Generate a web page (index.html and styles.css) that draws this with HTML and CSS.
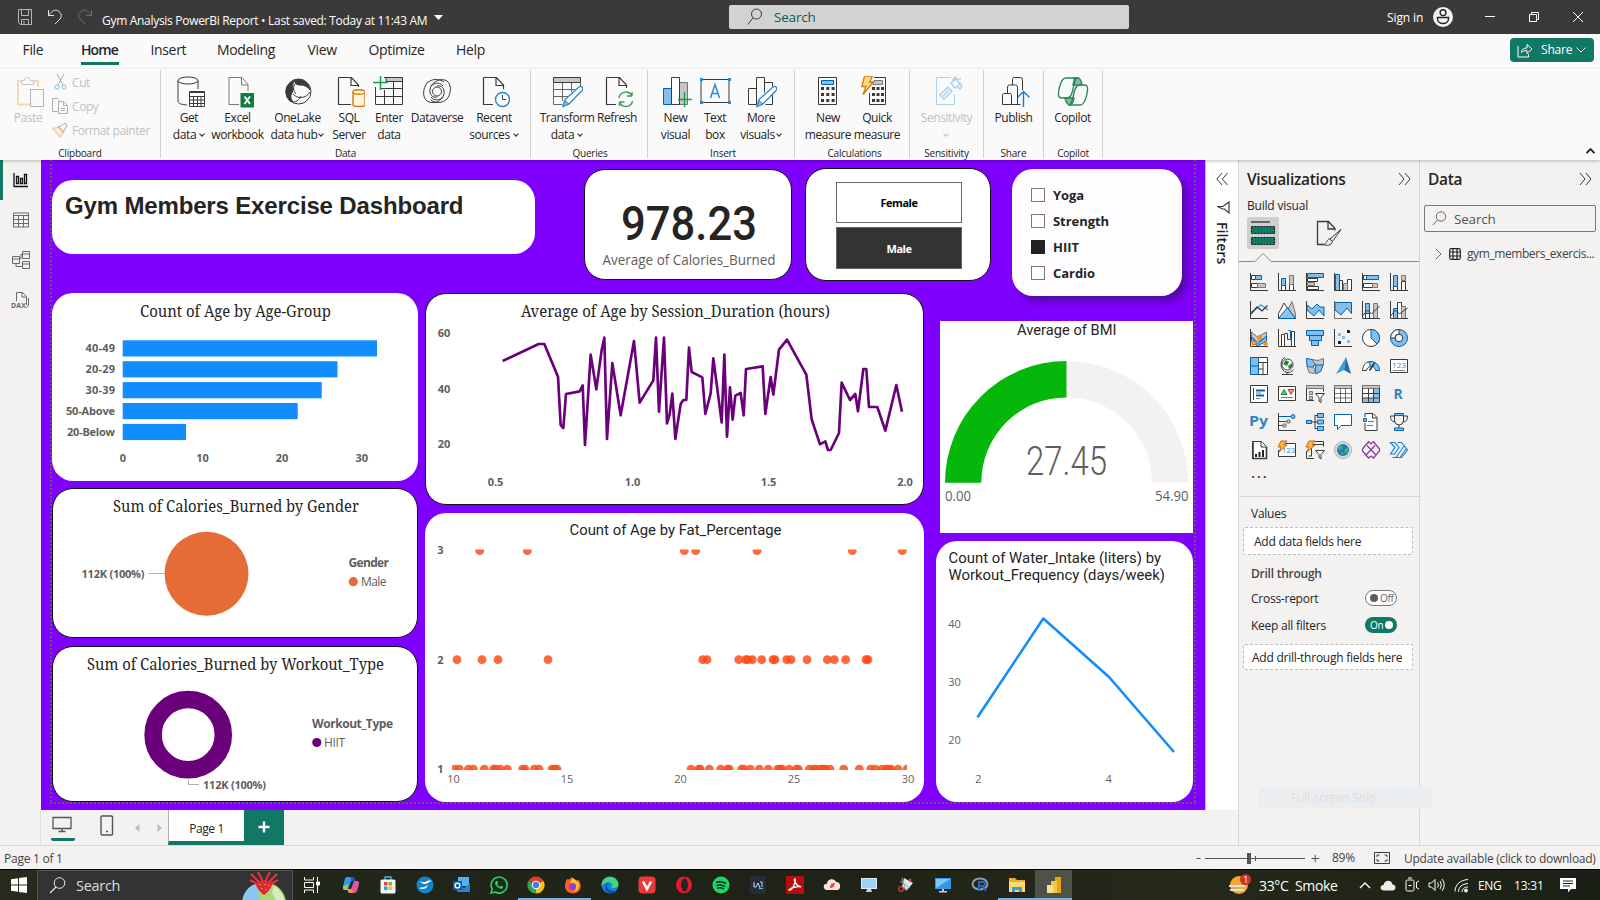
FILE: index.html
```html
<!DOCTYPE html>
<html lang="en">
<head>
<meta charset="utf-8">
<title>Gym Analysis PowerBi Report</title>
<link rel="stylesheet" href="styles.css">
</head>
<body>
<div class="app">

<header class="titlebar">
  <div class="quick">
    <svg width="16" height="18" viewBox="0 0 16 18" class="ln lightgray"><path d="M1.500 1.500h13v15h-11l-2-2zM4.500 1.500v6h7v-6M4.500 16.500v-5h7v5M7 13v3"/></svg>
    <svg width="16" height="18" viewBox="0 0 16 18" class="ln light"><path d="M1.500 2v5.500h5.500M1.500 7.500C5 2 9 1 12 3.500s3 6 0 8.500l-4 4"/></svg>
    <svg width="16" height="18" viewBox="0 0 16 18" class="ln dim"><path d="M14.500 2v5.500h-5.500M14.500 7.500C11 2 7 1 4 3.500s-3 6 0 8.500l4 4"/></svg>
  </div>
  <div class="doc">Gym Analysis PowerBi Report • Last saved: Today at 11:43 AM</div>
  <svg class="caret" width="9" height="5" viewBox="0 0 9 5"><path d="M0 0h9L4.500 5z" fill="#fff"/></svg>
  <div class="topsearch">
    <svg width="16" height="18" viewBox="0 0 16 18" class="ln"><circle cx="9.500" cy="6" r="5"/><path d="M6 9.800L.8 16.500"/></svg>
    <span>Search</span>
  </div>
  <div class="signin">Sign in</div>
  <svg class="avatar" width="20" height="20" viewBox="0 0 20 20"><circle cx="10" cy="10" r="10" fill="#f3f2f1"/><circle cx="10" cy="5.700" r="2.900" fill="none" stroke="#222" stroke-width="1.400"/><path d="M4.500 10.500h11v1c0 3-2.500 5-5.500 5s-5.500-2-5.500-5z" fill="none" stroke="#222" stroke-width="1.400"/></svg>
  <div class="winbtns">
    <svg width="12" height="12" viewBox="0 0 12 12" class="ln white"><path d="M1 5.500h10"/></svg>
    <svg width="12" height="12" viewBox="0 0 12 12" class="ln white"><path d="M1.500 3.500h7v7h-7zM3.500 3.500v-2h7v7h-2"/></svg>
    <svg width="12" height="12" viewBox="0 0 12 12" class="ln white"><path d="M1 1l10 10M11 1L1 11"/></svg>
  </div>
</header>

<nav class="tabs">
  <a class="w-file">File</a><a class="w-home active"><span>Home</span></a><a class="w-insert">Insert</a><a class="w-model">Modeling</a><a class="w-view">View</a><a class="w-opt">Optimize</a><a class="w-help">Help</a>
  <div class="share">
    <svg width="16" height="15" viewBox="0 0 16 15" class="ln white"><path d="M1 3v11h10.500v-3M4.500 9.500C5 6 7 5 10 5V1.500l5 4.500-5 4.500V7.500c-2.500 0-4 .5-5.500 2z"/></svg>
    <span>Share</span>
    <svg width="10" height="6" viewBox="0 0 10 6" class="ln white"><path d="M.5.500L5 5 9.500.500"/></svg>
  </div>
</nav>

<section class="ribbon">
  <div class="group g-clip">
    <div class="row">
      <div class="item off w-paste">
        <svg width="32" height="32" viewBox="0 0 32 32" fill="none"><path d="M9.500 5H6v23.500H18M22 5h4v6" stroke="#f6d9b0" stroke-width="2"/><path d="M9.500 4.500h3c0-4 6-4 6 0h3v4h-12z" stroke="#c8c6c4"/><path d="M18.500 13.500h13v17h-13z" stroke="#b5b3b1"/></svg>
        <span>Paste</span>
      </div>
      <div class="mini">
        <div><svg width="16" height="16" viewBox="0 0 16 16" fill="none"><path d="M5 0l6 11M12 0L6 11" stroke="#aaa"/><circle cx="5" cy="13" r="2" stroke="#8fbfe0"/><circle cx="12" cy="13" r="2" stroke="#8fbfe0"/></svg><span>Cut</span></div>
        <div><svg width="16" height="16" viewBox="0 0 16 16" fill="none" stroke="#b0aeac"><path d="M5.500 13.500h-5v-13h5l2 2M6.500 3.500h5l4 4v8h-9zM11.500 3.500v4h4M9 10.500h4M9 12.500h4"/></svg><span>Copy</span></div>
        <div><svg width="16" height="16" viewBox="0 0 16 16" fill="none"><path d="M1 6.500l7 8.500 4-5-5-5z" stroke="#f3cfa8" stroke-width="1.500" fill="#fbeede"/><path d="M6 5l5 5 1.500-2 2.500-5-2-2-4 3z" stroke="#aaa"/></svg><span class="fp">Format painter</span></div>
      </div>
    </div>
    <div class="label">Clipboard</div>
  </div>

  <div class="group g-data">
    <div class="row">
      <div class="item w48"><svg width="32" height="32" viewBox="0 0 32 32" class="ln"><ellipse cx="15" cy="4.500" rx="10" ry="3.500"/><path d="M5 4.500v21c0 2 4 3.200 9 3.500M25 4.500V13"/><path d="M16.500 15.500h15v15h-15z" fill="#fff"/><path d="M16.500 16.500h15M16.500 20.500h15M16.500 24h15M16.500 27.500h15M20.500 20v10M24.500 20v10M28 20v10"/></svg><span>Get<br>data<i></i></span></div>
      <div class="item w49"><svg width="32" height="32" viewBox="0 0 32 32" fill="none"><path d="M7 1.500h13l6 7V15M7 1.500v27h10M19.500 2v7H26" stroke="#797775"/><path d="M18.500 17h14v14.500h-14z" fill="#107c41"/><path d="M22.500 20.500l5.500 7.500M28 20.500L22.500 28" stroke="#fff" stroke-width="1.900"/></svg><span>Excel<br>workbook</span></div>
      <div class="item w71"><svg width="32" height="32" viewBox="0 0 32 32" class="ln"><circle cx="16.500" cy="15.500" r="12.500"/><path d="M13 4C4 7 1 17 7 24c1 1 3 2 4 2-2-3-3-6-1-9 2-4 0-6 1-9 0-2 1-3 2-4z" fill="#3b3a39"/><path d="M13 4c-1 3 1 5 5 5 5 0 8 2 10 5-1-6-5-10-11-10.500z" fill="#3b3a39"/><path d="M11 18c4 5 13 5 17-2M11 26c4 0 7-3 8-6M13 8c-2 3-2 7 1 10"/></svg><span>OneLake<br>data hub<i class="tight"></i></span></div>
      <div class="item w32"><svg width="32" height="32" viewBox="0 0 32 32" fill="none"><path d="M5.500 1.500h13l7 7.500v2M5.500 1.500v27H18M18 2v7.500h7" stroke="#3b3a39" stroke-width="1.200"/><path d="M20 16v13c0 2 12 2 12 0V16" fill="#fff4e0" stroke="#d67a0b" stroke-width="1.400"/><ellipse cx="26" cy="16" rx="6" ry="2.200" fill="#fff4e0" stroke="#d67a0b" stroke-width="1.400"/></svg><span>SQL<br>Server</span></div>
      <div class="item w48"><svg width="32" height="32" viewBox="0 0 32 32" class="ln"><path d="M13 1.500h16.500v4H13z" fill="#c8c6c4"/><path d="M2.500 11v17.500h27v-27H11M8 12.500h22M3 20.500h27M11.500 14v14M20.500 6v22"/><path d="M7.500 0v14M0 6.500h15" stroke="#1a9d48" stroke-width="1.500"/></svg><span>Enter<br>data</span></div>
      <div class="item w48"><svg width="32" height="32" viewBox="0 0 32 32" class="ln"><path d="M22 21c-4 6-11 7-16 4-5-4-4-13 0-18 4-4 12-5 17-1M10 10c4-6 11-8 16-5 5 4 4 13 0 18-4 4-11 5-16 1"/><circle cx="16" cy="15.500" r="4.500"/><path d="M22 10c-4-5-12-3-13 3s3 9 7 8M10 21c4 5 12 3 13-3s-3-9-7-8"/></svg><span>Dataverse</span></div>
      <div class="item w66"><svg width="32" height="32" viewBox="0 0 32 32" fill="none"><path d="M5.500 1.500h13l7 7.500v4M5.500 1.500v27H15M18 2v7.500h7" stroke="#3b3a39" stroke-width="1.200"/><circle cx="24.500" cy="23.500" r="7" fill="#fff" stroke="#2b88c8" stroke-width="1.500"/><path d="M24.500 19v4.500H28" stroke="#3b3a39"/></svg><span>Recent<br>sources<i></i></span></div>
    </div>
    <div class="label">Data</div>
  </div>

  <div class="group g-query">
    <div class="row">
      <div class="item w60"><svg width="32" height="32" viewBox="0 0 32 32" class="ln"><path d="M2.500 1.500h27v5h-27z" fill="#c8c6c4"/><path d="M2.500 6v22.500h9M29.500 6v5M3 13.500h21M3 20.500h14M11.500 7v18M20.500 7v9" stroke="#666"/><path d="M12 30.500l2-7L28 11c2-2 5 1 3 3.500L18 28z" fill="#fff" stroke="#2b88c8" stroke-width="1.300"/><path d="M12 30.500l2-6 4 3.500z" fill="#83beec" stroke="#2b88c8"/></svg><span>Transform<br>data<i></i></span></div>
      <div class="item w40"><svg width="32" height="32" viewBox="0 0 32 32" fill="none"><path d="M5.500 1.500h13l7 7.500v3M5.500 1.500v27H15M18 2v7.500h7" stroke="#3b3a39" stroke-width="1.200"/><path d="M18 22c1-7 10-8 13-2v-4M31 20h-5M31.500 25c-1 6-10 8-13 1v4M18.500 26h5" stroke="#3b9a55" stroke-width="1.400"/></svg><span>Refresh</span></div>
    </div>
    <div class="label">Queries</div>
  </div>

  <div class="group g-insert">
    <div class="row">
      <div class="item w39"><svg width="32" height="32" viewBox="0 0 32 32" class="ln"><path d="M19.500 6.500h8v22h-8z" fill="#c8c6c4" stroke="#777"/><path d="M3.500 12.500h8v16h-8z" fill="#83beec" stroke="#0063b1"/><path d="M11.500 1.500h8v27h-8z" fill="#fff"/><path d="M24.500 16v15M18 23.500h14" stroke="#1a9d48" stroke-width="1.400"/></svg><span>New<br>visual</span></div>
      <div class="item w40"><svg width="32" height="32" viewBox="0 0 32 32" class="ln"><path d="M2 3.500h28v23H2z"/><path d="M1 2h3v3H1zM29 2h3v3h-3zM1 25h3v3H1zM29 25h3v3h-3z" fill="#2b88d8" stroke="none"/><path d="M11.500 22L16 8.500 20.500 22M13 17.500h6" stroke="#2b88d8" stroke-width="1.500"/></svg><span>Text<br>box</span></div>
      <div class="item w52"><svg width="32" height="32" viewBox="0 0 32 32" class="ln"><path d="M3.500 28.500v-16h8v16zM11.500 28.500v-27h8v15M19.500 6.500h8v4M27.500 19v9.500h-7"/><path d="M12 30.500l2-7L28 11c2-2 5 1 3 3.500L18 28z" fill="#fff" stroke="#2b88c8" stroke-width="1.300"/><path d="M12 30.500l2-6 4 3.500z" fill="#83beec" stroke="#2b88c8"/></svg><span>More<br>visuals<i class="tight"></i></span></div>
    </div>
    <div class="label">Insert</div>
  </div>

  <div class="group g-calc">
    <div class="row">
      <div class="item w48"><svg width="32" height="32" viewBox="0 0 32 32" class="ln"><path d="M6.500 1.500h18v27h-18z"/><path d="M9.500 4.500h12v4h-12z" fill="#83beec" stroke="#0063b1"/><path d="M9 12.500h14M9 18.500h14M9 24.500h14" stroke-width="3" stroke-dasharray="3 2.300"/></svg><span>New<br>measure</span></div>
      <div class="item w50"><svg width="32" height="32" viewBox="0 0 32 32" class="ln"><path d="M13 1.500h11.500v27h-16V17"/><path d="M13 4.500h8.500v4H12z" fill="#c8c6c4" stroke="#777"/><path d="M11 12.500h12M11 18.500h12M11 24.500h12" stroke-width="3" stroke-dasharray="3 1.500"/><path d="M3.500.200h8L8.500 6h4L2 18.500 5 10.500H.800z" fill="#fcd98b" stroke="#d67a0b" stroke-width="1.300"/></svg><span>Quick<br>measure</span></div>
    </div>
    <div class="label">Calculations</div>
  </div>

  <div class="group g-sens">
    <div class="row">
      <div class="item off w72"><svg width="32" height="32" viewBox="0 0 32 32" fill="none" stroke="#a9d3ec"><path d="M20 1.500H5.500v27h18V18"/><path d="M9 19l8-8 4 4-8 8zM12 20l6-6M20 7l4 5 5-4-4-5zM21 5l3-4 3 3M26 10l3 3 2-3-2-3M28 4l2-2" stroke-width="1.500"/></svg><span>Sensitivity<br><i class="solo"></i></span></div>
    </div>
    <div class="label">Sensitivity</div>
  </div>
  <div class="group g-share">
    <div class="row">
      <div class="item w58"><svg width="32" height="32" viewBox="0 0 32 32" class="ln"><path d="M14.500 9V3.500q0-2 2-2h6q2 0 2 2V14M9.500 17v-6q0-2 2-2h6q2 0 2 2v17M5.500 17.500h6q2 0 2 2v9h-9v-9q0-2 1-2zM13.500 28.500h9"/><path d="M25.500 31V15.500M19.500 21.500l6-6 6 6" stroke="#1c79c4" stroke-width="1.400"/></svg><span>Publish</span></div>
    </div>
    <div class="label">Share</div>
  </div>
  <div class="group g-cop">
    <div class="row">
      <div class="item w57"><svg width="32" height="32" viewBox="0 0 32 32" fill="none" stroke="#2a8a57" stroke-width="1.400"><path d="M16 9c1-4 2-7 0-7h5c2 0 3 2 4 7z" fill="#83bd9d"/><path d="M8 22c1 4 2 7 5 7 2 0 3-2 4-7z" fill="#83bd9d"/><path d="M20 2H9C4 2 2 12 1.500 17c-.5 4 1 5 4 5h4c4 0 5-3 6-7l2-8c.5-3 2-5 4-5z"/><path d="M12 29h11c5 0 7-10 7.500-15 .5-4-1-5-4-5h-4c-3 0-4 3-5 6l-2 8c-1 4-2 6-4 6z"/></svg><span>Copilot</span></div>
    </div>
    <div class="label">Copilot</div>
  </div>
  <svg class="collapse" width="9" height="6" viewBox="0 0 9 6"><path d="M.5 5.200l4-4 4 4" fill="none" stroke="#222" stroke-width="1.900"/></svg>
</section>

<main class="body">
  <aside class="rail">
    <div class="on"><svg width="18" height="18" viewBox="0 0 18 18" fill="none" stroke="#111" stroke-width="1.300"><path d="M2 2v13.500h14M4.500 5.500h2v7h-2zM8.500 7.500h2v5h-2zM12.500 3.500h2v9h-2z"/></svg></div>
    <div><svg width="18" height="18" viewBox="0 0 18 18" class="ln gray"><path d="M1.500 2h15v14h-15zM1.500 4.500h15M1.500 8.500h15M1.500 12.500h15M6.500 4.500V16M11.500 4.500V16"/></svg></div>
    <div><svg width="20" height="20" viewBox="0 0 20 20" class="ln gray"><path d="M11.500 1.500h7v7h-7zM11.500 4h7M1.500 6.500h7v7h-7zM1.500 9h7M11.500 11.500h7v7h-7zM11.500 14h7M8.500 8.500h1.500v-4h1.500M5 13.500v3h6.500"/></svg></div>
    <div><svg width="20" height="20" viewBox="0 0 20 20" class="ln gray"><path d="M5.500 11V2.500h6l4 4V15M11 2.500V7h4M17.500 8v7l-2 2.500"/><text x="0" y="18" class="dax" textLength="15">DAX</text></svg></div>
  </aside>

  <div class="center">
    <div class="stage">
      <div class="canvas">
        <div class="page">
          <div class="top">
            <div class="v title"><h1>Gym Members Exercise Dashboard</h1></div>
            <div class="v card line">
              <svg width="206" height="109" viewBox="585 170 206 109"><text x="621" y="239.500" class="din big" textLength="136" lengthAdjust="spacingAndGlyphs">978.23</text><text x="602.500" y="265" class="seg mid" textLength="173" lengthAdjust="spacingAndGlyphs">Average of Calories_Burned</text></svg>
            </div>
            <div class="v slicer line"><button>Female</button><button class="sel">Male</button></div>
            <div class="v checks">
              <label><b></b>Yoga</label><label><b></b>Strength</label><label><b class="sel"></b>HIIT</label><label><b></b>Cardio</label>
            </div>
          </div>
          <div class="cols">
            <div class="c1">
              <div class="v h188"><svg width="366" height="188" viewBox="52 293 366 188">
                <text x="140" y="317" class="ser" textLength="191" lengthAdjust="spacingAndGlyphs">Count of Age by Age-Group</text>
                <g fill="#118dff"><rect x="122.700" y="340.300" width="254.300" height="16.200"/><rect x="122.700" y="361.200" width="214.800" height="16.200"/><rect x="122.700" y="382.100" width="199" height="16.200"/><rect x="122.700" y="403" width="175" height="16.200"/><rect x="122.700" y="423.900" width="63.300" height="16.200"/></g>
                <g class="seg ax b"><text x="85.500" y="352" textLength="29.500">40-49</text><text x="85.500" y="373" textLength="29.500">20-29</text><text x="85.500" y="394" textLength="29.500">30-39</text><text x="66" y="415" textLength="49">50-Above</text><text x="67" y="436" textLength="48">20-Below</text></g>
                <g class="seg ax b m"><text x="123" y="462">0</text><text x="202.500" y="462">10</text><text x="282" y="462">20</text><text x="361.700" y="462">30</text></g>
              </svg></div>
              <div class="v line h149"><svg width="364" height="147" viewBox="53 489 364 147">
                <text x="113" y="512" class="ser" textLength="246" lengthAdjust="spacingAndGlyphs">Sum of Calories_Burned by Gender</text>
                <circle cx="206.500" cy="573.700" r="42" fill="#e66c37"/><path d="M148.500 573.500H164" stroke="#b3b0ad"/>
                <g class="seg ax b"><text x="81.500" y="578" textLength="63">112K (100%)</text></g>
                <text x="348.500" y="567" class="seg leg b" textLength="40.500">Gender</text><circle cx="353.300" cy="581.700" r="4.600" fill="#e66c37"/><text x="361" y="586" class="seg leg" textLength="25.500">Male</text>
              </svg></div>
              <div class="v line h156"><svg width="364" height="154" viewBox="53 647 364 154">
                <text x="87" y="670" class="ser" textLength="297" lengthAdjust="spacingAndGlyphs">Sum of Calories_Burned by Workout_Type</text>
                <circle cx="188.200" cy="734.700" r="35.100" fill="none" stroke="#6b007b" stroke-width="17.500"/><path d="M188.500 780v4.500H199" stroke="#b3b0ad" fill="none"/>
                <g class="seg ax b"><text x="203" y="789" textLength="63">112K (100%)</text></g>
                <text x="312" y="728" class="seg leg b" textLength="81">Workout_Type</text><circle cx="316.800" cy="742.500" r="4.600" fill="#6b007b"/><text x="324" y="747" class="seg leg" textLength="21">HIIT</text>
              </svg></div>
            </div>
            <div class="c2">
              <div class="v line h212"><svg width="497" height="210" viewBox="426 294 497 210">
                <text x="521" y="317" class="ser" textLength="309" lengthAdjust="spacingAndGlyphs">Average of Age by Session_Duration (hours)</text>
                <g transform="translate(415 285) scale(.33333)"><polyline fill="none" stroke="#6b007b" stroke-width="8" stroke-linejoin="round" points="263,228 371,177 388,177 429,275 437,420 445,429 453,327 494,319 503,301 510,480 527,209 544,313 560,195 568,158 576,462 592,234 617,391 657,168 674,353 715,286 723,158 732,380 747,158 756,415 764,388 772,326 781,462 797,357 805,345 814,345 822,188 830,261 862,277 871,387 887,325 895,220 920,412 928,209 936,455 945,307 953,404 961,332 977,324 986,391 993,252 1043,244 1051,387 1067,276 1075,329 1092,194 1116,164 1174,269 1190,403 1215,478 1231,469 1239,495 1247,495 1272,444 1280,293 1305,345 1321,327 1329,379 1345,252 1354,252 1362,366 1387,366 1411,437 1444,300 1461,380"/></g>
                <g class="seg ax b m"><text x="444" y="337">60</text><text x="444" y="393">40</text><text x="444" y="448">20</text><text x="495.500" y="486">0.5</text><text x="632.500" y="486">1.0</text><text x="768.500" y="486">1.5</text><text x="905" y="486">2.0</text></g>
              </svg></div>
              <div class="v h289"><svg width="499" height="289" viewBox="425 513 499 289">
                <text x="569.500" y="535" class="din tt" textLength="212" lengthAdjust="spacingAndGlyphs">Count of Age by Fat_Percentage</text>
                <clipPath id="plot"><rect x="452" y="549.500" width="455" height="220.500"/></clipPath>
                <g id="dots" clip-path="url(#plot)" fill="#fe4e1a" fill-opacity=".85"></g>
                <g class="seg ax m"><g class="b"><text x="440.500" y="554">3</text><text x="440.500" y="664">2</text><text x="440.500" y="773">1</text></g><text x="453.500" y="783">10</text><text x="567" y="783">15</text><text x="680.500" y="783">20</text><text x="794" y="783">25</text><text x="908" y="783">30</text></g>
              </svg></div>
            </div>
            <div class="c3">
              <div class="v square h212b"><svg width="253" height="212" viewBox="940 321 253 212">
                <text x="1017" y="335" class="din tt" textLength="99.500" lengthAdjust="spacingAndGlyphs">Average of BMI</text>
                <path d="M945 482.700A121.700 121.700 0 0 1 1066.700 361v36.400A85.300 85.300 0 0 0 981.300 482.700z" fill="#05b70a"/>
                <path d="M1066.700 361A121.700 121.700 0 0 1 1188.300 482.700H1152A85.300 85.300 0 0 0 1066.700 397.400z" fill="#f3f2f1"/>
                <text x="1026" y="475" class="din val" textLength="81" lengthAdjust="spacingAndGlyphs">27.45</text>
                <text x="945" y="501" class="seg mid" textLength="26" lengthAdjust="spacingAndGlyphs">0.00</text><text x="1155" y="501" class="seg mid" textLength="33.500" lengthAdjust="spacingAndGlyphs">54.90</text>
              </svg></div>
              <div class="v h261"><svg width="257" height="261" viewBox="936 541 257 261">
                <text x="948.500" y="563" class="din tt" textLength="212.500" lengthAdjust="spacingAndGlyphs">Count of Water_Intake (liters) by</text>
                <text x="948.500" y="580" class="din tt" textLength="216.500" lengthAdjust="spacingAndGlyphs">Workout_Frequency (days/week)</text>
                <polyline points="977.500,717.300 1043.300,618.500 1109,677 1174,752" fill="none" stroke="#118dff" stroke-width="2.600" stroke-linejoin="round"/>
                <g class="seg ax m"><text x="954.500" y="628">40</text><text x="954.500" y="686">30</text><text x="954.500" y="744">20</text><text x="978.300" y="783">2</text><text x="1108.700" y="783">4</text></g>
              </svg></div>
            </div>
          </div>
        </div>
      </div>
      <aside class="filters">
        <svg width="12" height="14" viewBox="0 0 12 14" class="ln"><path d="M6 1L.8 7 6 13M11.500 1L6.300 7l5.200 6"/></svg>
        <svg width="13" height="13" viewBox="0 0 13 13" class="ln"><path d="M12 1v11L7.500 8H5.500L1 5.500h5z" stroke-width="1.200"/></svg>
        <span>Filters</span>
      </aside>
    </div>
    <footer class="pages">
      <div class="desk"><svg width="20" height="17" viewBox="0 0 20 17"><path d="M1 1.500h18v11H1zM10 12.500V15M6.500 15.500h7" fill="none" stroke="#555" stroke-width="1.300"/></svg></div>
      <svg class="phone" width="14" height="21" viewBox="0 0 14 21"><rect x="1" y="1" width="11.500" height="19" rx="1" fill="none" stroke="#555" stroke-width="1.400"/><path d="M6 16.500h2" stroke="#555" stroke-width="1.600"/></svg>
      <svg class="pv" width="5" height="8" viewBox="0 0 5 8"><path d="M4.500 0v8L0 4z" fill="#bebbb8"/></svg>
      <svg class="nx" width="5" height="8" viewBox="0 0 5 8"><path d="M.5 0v8L5 4z" fill="#bebbb8"/></svg>
      <div class="ptab">Page 1</div>
      <div class="padd"><svg width="12" height="12" viewBox="0 0 12 12"><path d="M6 .500v11M.500 6h11" stroke="#fff" stroke-width="2.400"/></svg></div>
    </footer>
  </div>

  <aside class="viz">
    <div class="ph"><h2>Visualizations</h2><svg width="13" height="14" viewBox="0 0 13 14" class="ln"><path d="M1 1l5 6-5 6M7 1l5 6-5 6"/></svg></div>
    <p class="bv">Build visual</p>
    <div class="modes">
      <div class="mode sel"><svg width="26" height="26" viewBox="0 0 26 26"><path d="M1 2h19" stroke="#222" stroke-width="1.200"/><g fill="#117865" stroke="#111" stroke-width="1.200" stroke-dasharray="2 1"><path d="M1.500 6.500h23v7h-23zM1.500 17.500h23v7h-23z"/></g></svg></div>
      <div class="mode"><svg width="26" height="26" viewBox="0 0 26 26" class="ln"><path d="M8 24.500H1.500v-23h11l6.500 7v2M12 2v7h6.500" stroke-width="1.300"/><path d="M25 9.500L14 19l2.500 2.500zM13.500 19c-3 0-2 5-6 5.500 3 1.500 8 1 9-3z"/></svg></div>
    </div>
    <svg class="notch" width="180" height="9" viewBox="0 0 180 9"><path d="M0 8.500h16l8-8 8 8h148" fill="none" stroke="#8a8886"/></svg>
    <div class="icons">
      <svg viewBox="0 0 18 18"><path d="M1.500 2.500h4v4h-4zM1.500 10.500h6v4h-6z" class="w"/><path d="M5.500 2.500h6v4h-6z" class="bl"/><path d="M7.500 10.500h8v4h-8z" class="g"/><path d="M.5 0v17.500H18" class="k"/></svg>
      <svg viewBox="0 0 18 18"><path d="M3.500 12.500h4v5h-4zM11.500 11.500h4v6h-4z" class="w"/><path d="M3.500 5.500h4v7h-4z" class="bl"/><path d="M11.500 2.500h4v9h-4z" class="g"/><path d="M.5 0v17.500H18" class="k"/></svg>
      <svg viewBox="0 0 18 18"><path d="M1.500.500h16v4h-16z" class="bl"/><path d="M1.500 5.500h10v3h-10zM1.500 13.500h11v3h-11z" class="w"/><path d="M1.500 9.500h7v3h-7z" class="g"/><path d="M.5 0v17.500H18" class="k"/></svg>
      <svg viewBox="0 0 18 18"><path d="M1.500 1.500h4v16h-4z" class="bl"/><path d="M5.500 7.500h3v10h-3zM13.500 6.500h4v11h-4z" class="w"/><path d="M9.500 10.500h4v7h-4z" class="g"/><path d="M.5 0v17.500H18" class="k"/></svg>
      <svg viewBox="0 0 18 18"><path d="M1.500 2.500h4v4h-4zM1.500 10.500h9v4h-9z" class="w"/><path d="M4.500 2.500h12v4h-12z" class="bl"/><path d="M10.500 10.500h5v4h-5z" class="g"/><path d="M.5 0v17.500H18" class="k"/></svg>
      <svg viewBox="0 0 18 18"><path d="M3.500 13.500h4v4h-4zM11.500 8.500h4v9h-4z" class="w"/><path d="M3.500 2.500h4v11h-4z" class="bl"/><path d="M11.500 2.500h4v5h-4z" class="g"/><path d="M.5 0v17.500H18" class="k"/></svg>

      <svg viewBox="0 0 18 18"><path d="M1 11l5-3 5-4 7 5" class="n" stroke="#4aa0d8" stroke-width="1.400"/><path d="M1 13l6-7 5 4 5.500-5.500" class="k" stroke-width="1.300"/><path d="M.5 0v17.500H18" class="k"/></svg>
      <svg viewBox="0 0 18 18"><path d="M9 10l5-9.500 3.500 12v5z" class="g"/><path d="M.5 12.500L6 2l6 9-5 6.500H.5z" class="w"/><path d="M.500 17.500L9.500 6.500l8 11z" fill="#83beec" fill-opacity=".85" stroke="#0063b1"/></svg>
      <svg viewBox="0 0 18 18"><path d="M1 4l5 4 5-5 3 3h4v9l-5-6-5 6-7-6z" class="bl"/><path d="M.5 0v17.500H18" class="k"/></svg>
      <svg viewBox="0 0 18 18"><path d="M1 1.500h16.500v11L13 7l-6 7-6-5z" class="bl"/><path d="M.5 0v17.500H18" class="k" stroke-opacity=".7"/></svg>
      <svg viewBox="0 0 18 18"><path d="M3.500 2.500h4v15h-4z" class="bl"/><path d="M11.500 2.500h4v15h-4z" class="g"/><path d="M3.500 12.500h4v5h-4z" class="w"/><path d="M.5 15l5-6 4 4 8-8M.5 0v17.500H18" class="k"/></svg>
      <svg viewBox="0 0 18 18"><path d="M3.500 7.500h4v10h-4z" class="bl"/><path d="M7.500 1.500h4v16h-4z" class="w"/><path d="M11.500 5.500h4v12h-4z" class="g"/><path d="M.5 15l5-6 4 4 8-6M.5 0v17.500H18" class="k"/></svg>

      <svg viewBox="0 0 18 18"><path d="M1.500 3l6 5 9-5v5l-9 5-6-5z" class="g"/><path d="M1.500 8l6 7 9-8v5l-9 5-6-5z" class="bl"/><path d="M2 12.500h4v3H2zM8 7h3v3H8zM14 13h3v3h-3z" fill="#f7a94a" stroke="#d67a0b"/><path d="M.5 0v17.500H18" class="k"/></svg>
      <svg viewBox="0 0 18 18"><path d="M3.500 5.500h3v12h-3zM13.500 2.500h3v15h-3z" class="w"/><path d="M10.500 1.500h2v9h-3" class="n" stroke="#0063b1"/><path d="M6.500 4.500h3v6M.5 0v17.500H18" class="k"/></svg>
      <svg viewBox="0 0 18 18"><path d="M.5 1.500h17v5H.500zM3.500 6.500h12v5h-12zM5.500 11.500h7v5h-7z" class="bl"/></svg>
      <svg viewBox="0 0 18 18"><path d="M13 1h3v3h-3zM4 12h3v3H4z" fill="#222"/><path d="M4 4h3v3H4zM8 7h3v3H8zM13 11h3v3h-3z" fill="#83beec"/><path d="M.5 0v17.500H18" class="k"/></svg>
      <svg viewBox="0 0 18 18"><circle cx="9" cy="9" r="8.500" class="w"/><path d="M9 .500a8.500 8.500 0 0 1 6 14.500L9 9z" class="bl"/></svg>
      <svg viewBox="0 0 18 18"><circle cx="9" cy="9" r="8.500" class="bl"/><path d="M9 .500A8.500 8.500 0 0 0 .500 9H5a4 4 0 0 1 4-4z" class="w"/><circle cx="9" cy="9" r="3.800" fill="#f3f2f1" stroke="#3a3a38"/></svg>

      <svg viewBox="0 0 18 18"><path d="M.5.500h17v17H.500z" class="w"/><path d="M.5.500h8v17h-8zM.5 9h8" class="bl"/><path d="M8.500 5.500h9M13 5.500v12M8.500 12h4.500" class="k"/></svg>
      <svg viewBox="0 0 18 18"><circle cx="9.500" cy="7.500" r="5.500" class="w"/><path d="M5 7l3-4 3 2-2 4zM10 9l4-3 0 4-3 2z" fill="#1a8a3c"/><path d="M7 .500C1 3 2 14 9 15.500c3 0 5-1 6.500-3M9 15.500v2M4 17.500h11" class="k"/></svg>
      <svg viewBox="0 0 18 18"><path d="M.5 1.500l5.500 1 3 4-2 4-6-1z" class="bl"/><path d="M6 2.500l6 1 5.500-2V8l-7 1-2-3z" class="g"/><path d="M1 9.500l6 1 3 3-2 3-5-1z" class="g"/><path d="M10 8h7l-2 6-5 3-1-4z" class="bl"/></svg>
      <svg viewBox="0 0 18 18"><path d="M12 0L2 17l8-4z" fill="#3ba4d0"/><path d="M12 0l5 17-7-4z" fill="#1c6fae"/></svg>
      <svg viewBox="0 0 18 18"><path d="M.5 13.500C1 7 5 4.500 9 4.500v5c-3 0-4 2-4.500 4z" class="w"/><path d="M7 4.800C13 3.500 17.500 8 17.500 13.500h-4C13 10 10 9 8.500 9.500z" class="bl"/><path d="M7.500 13.500L12.500 6" class="k" stroke-width="1.600"/></svg>
      <svg viewBox="0 0 18 18"><path d="M.5 2.500h17v13H.500z" class="w"/><text x="2" y="11" class="it" textLength="14">123</text><path d="M3 13.500h12" class="k" stroke-opacity=".6"/></svg>

      <svg viewBox="0 0 18 18"><path d="M.5.500h17v17H.500z" class="w"/><path d="M3.500 3v12" class="k"/><path d="M6 5.500h9M6 10.500h8" stroke="#0063b1" stroke-width="2"/><path d="M6 8h5M6 13.500h4" class="n" stroke="#777"/></svg>
      <svg viewBox="0 0 18 18"><path d="M.5 1.500h17v14H.500z" class="w"/><path d="M3 9.500l3-5 3 5z" fill="#6fbf73" stroke="#1a8a3c"/><path d="M10 4.500h6l-3 5z" fill="#f09090" stroke="#d13438"/><path d="M3 12.500h12" class="n" stroke="#777"/></svg>
      <svg viewBox="0 0 18 18"><path d="M8 15.500H.500V.500h17v6" class="k"/><path d="M.5.500h17v3H.500z" class="g"/><path d="M3.500 6.500h3v3h-3zM3.500 11.500h3v3h-3z" class="g"/><path d="M9.500 8.500h9l-3.500 4v5l-2-1.500v-3.500z" class="w"/></svg>
      <svg viewBox="0 0 18 18"><path d="M.5.500h17v17H.500z" class="w"/><path d="M.5.500h17v3H.500z" class="g"/><path d="M.5 8.500h17M.5 13h17M6.500 3.500v14M11.500 3.500v14" class="k" stroke-opacity=".7"/></svg>
      <svg viewBox="0 0 18 18"><path d="M.5.500h17v17H.500z" class="w"/><path d="M12 4h5.500v13.500H.500V13H12z" fill="#83beec"/><path d="M.5.500h17v3H.500z" class="g"/><path d="M.5 8.500h17M.5 13h17M6.500 3.500v14M11.500 3.500v14M.5 3v14.500h17V3" class="k"/></svg>
      <svg viewBox="0 0 18 18"><text x="3.500" y="14" class="rt">R</text></svg>

      <svg viewBox="0 0 18 18"><text x="-1" y="13" class="rt py" textLength="19" lengthAdjust="spacingAndGlyphs">Py</text></svg>
      <svg viewBox="0 0 18 18"><path d="M1 3.500h12M1 8.500h8M1 12.500h4" class="n" stroke="#0063b1"/><circle cx="15" cy="3.500" r="2" class="bl"/><path d="M9 7h3v3H9zM5 11h3v3H5z" class="g"/><path d="M.5 0v17.500H18" class="k"/></svg>
      <svg viewBox="0 0 18 18"><path d="M6 9h6M9 2.500h3M9 15.500h3M9 2v14" class="k"/><path d="M.5 7.500h5v3h-5zM11.500.500h6v4h-6zM11.500 7h6v4h-6zM11.500 13.500h6v4h-6z" class="bl"/></svg>
      <svg viewBox="0 0 18 18"><path d="M.5 1.500h17v11H7l-3.500 4v-4h-3z" fill="#fff" stroke="#0063b1"/></svg>
      <svg viewBox="0 0 18 18"><path d="M3 4V.500h8l4 4v13H3V10M10.500.500v4.500H15" class="w"/><path d="M1.500 5.500h3v3h-3z" class="bl"/><path d="M6 8.500h6M5 12.500h6" stroke="#2b88d8"/></svg>
      <svg viewBox="0 0 18 18"><path d="M4.500 1.500h9V8q-1 4-4.500 4T4.500 8zM4.500 3h-4c0 4 1 5.500 4.500 6M13.500 3h4c0 4-1 5.500-4.500 6M9 12v3" class="k"/><path d="M4.500.500h9v2h-9zM4.500 15h9v2.500h-9z" class="bl"/></svg>

      <svg viewBox="0 0 18 18"><path d="M2.500.500h9l5 5v12h-14z" class="w"/><path d="M11 1v5h5" class="k"/><path d="M5 13h2v3H5zM8.500 11h2v5h-2zM12 9h2v7h-2z" fill="#222"/><path d="M3 .500v17h13.500V6" class="k" stroke-width="1.600"/></svg>
      <svg viewBox="0 0 18 18"><path d="M6 2.500h11.500v13H.500V9" class="w"/><text x="4" y="12" class="it" textLength="13">123</text><path d="M3 0h6L6 4h3L1 11l2-5H0z" fill="#fcb64a" stroke="#c56a0b"/></svg>
      <svg viewBox="0 0 18 18"><path d="M7 .500h10.500v5M.5 10v7.500H8M7 3.500h10.500M5.500 7v8h-3" class="k"/><path d="M9.500 9.500h9l-3.500 4v4.500l-2-1.500v-3z" class="w"/><path d="M3 0h6L6 4h3L1 11l2-5H0z" fill="#fcb64a" stroke="#c56a0b"/></svg>
      <svg viewBox="0 0 18 18"><circle cx="9" cy="9" r="8.500" fill="#d6dcda" stroke="#a9b5b0"/><circle cx="9" cy="9" r="6" fill="#2474c0"/><path d="M4 6l4-2 1 3-4 3zM10 9l4-3 0 5-3 2zM6 12l3-1 1 3z" fill="#3fb560"/></svg>
      <svg viewBox="0 0 18 18"><path d="M6.500.800L9 3l2.500-2.200L17.500 8v2l-6 7L9 15l-2.500 2L.5 10V8zM5 4.500l8.500 9M13 4.500l-8.500 9" fill="none" stroke="#8a3a9a" stroke-width="1.300"/></svg>
      <svg viewBox="0 0 18 18"><path d="M.5 1.500H5L9 6.500 4.500 13H.5l4.500-6.500zM7.500 1.500h4L17.500 9l-6 7.500H2.500M14 5l-8 11.500M16 8l-6 8.500" fill="none" stroke="#1c86d6" stroke-width="1.200"/></svg>
    </div>
    <div class="more">...</div>
    <div class="wells">
      <p class="lab">Values</p>
      <div class="well">Add data fields here</div>
      <p class="lab st">Drill through</p>
      <div class="tg"><span>Cross-report</span><em class="off"><u></u>Off</em></div>
      <div class="tg second"><span>Keep all filters</span><em class="on">On<u></u></em></div>
      <div class="well two">Add drill-through fields here</div>
    </div>
    <div class="ghost">Full-screen Snip</div>
  </aside>

  <aside class="datap">
    <div class="ph"><h2>Data</h2><svg width="13" height="14" viewBox="0 0 13 14" class="ln"><path d="M1 1l5 6-5 6M7 1l5 6-5 6"/></svg></div>
    <div class="dsearch"><svg width="15" height="15" viewBox="0 0 15 15" class="ln gray"><circle cx="9" cy="5.500" r="4.700"/><path d="M5.500 9L.8 14"/></svg><span>Search</span></div>
    <div class="trow"><svg width="7" height="12" viewBox="0 0 7 12" class="ln gray"><path d="M.8.800L6 6 .8 11.200"/></svg><svg width="12" height="12" viewBox="0 0 12 12" fill="none" stroke="#222" stroke-width="1.200"><rect x=".7" y=".7" width="10.600" height="10.600" rx="1.500"/><path d="M.7 4h10.600M.7 8h10.600M4 .7v10.600M8 .7v10.600"/></svg><span>gym_members_exercis...</span></div>
  </aside>
</main>

<footer class="status">
  <span class="pg">Page 1 of 1</span>
  <svg width="124" height="14" viewBox="1195 850 124 14"><path d="M1196.500 857.500h4M1205 857.500h100M1311.500 857.500h7.500M1315.200 853.700v7.500M1255.500 855v5" stroke="#555"/><path d="M1247 852h4v11h-4z" fill="#555"/></svg>
  <span class="pct">89%</span>
  <svg width="16" height="12" viewBox="0 0 16 12" class="ln"><path d="M.5.500h15v11H.500z" /><path d="M3 5V3h2.500M10.500 3H13v2M13 7v2h-2.500M5.500 9H3V7"/></svg>
  <span class="upd">Update available (click to download)</span>
</footer>

<footer class="taskbar">
  <div class="start"><svg width="16" height="16" viewBox="0 0 16 16"><path d="M0 2.200l7-1v6.300H0zM8 1l8-1v7.500H8zM0 8.500h7v6.300l-7-1zM8 8.500h8V16l-8-1z" fill="#fff"/></svg></div>
  <div class="tsearch"><svg width="17" height="17" viewBox="0 0 17 17" class="ln light"><circle cx="10.500" cy="6" r="5.300"/><path d="M7 10L1 16" stroke-width="1.300"/></svg><span>Search</span>
    <svg class="doodle" width="48" height="29" viewBox="0 0 48 29"><circle cx="24" cy="33" r="22" fill="#a8d77c"/><path d="M3 27c2-9 9-14 18-15l3 6-7 5 3 6H3z" fill="#8cc4f2"/><path d="M34 15c6 3 9 8 10 14h-8l-4-7z" fill="#d8ecc0"/><path d="M11 3l9 9M18 1l5 10M30 1l-5 10M37 3l-9 9M10 9l9 5M38 9l-9 5" stroke="#e0343c" stroke-width="2.200"/><path d="M15 12l9-3 9 3q-3 8-9 12-6-4-9-12z" fill="#e0282e"/><path d="M20 13v1M25 13v1M29 14v1M22 17v1M26 18v1" stroke="#ffd0c0"/></svg>
  </div>
  <div class="apps">
    <div class="tv"><svg viewBox="0 0 18 18" class="ln white"><path d="M1.500 1v3h9V1M1.500 17v-3h9v3M1.500 6.500h9v5h-9zM14.500 1v16"/><path d="M13.500 6h3v3h-3z" fill="#fff"/></svg></div>
    <div><svg viewBox="0 0 18 18"><path d="M5 1h5c2 0 2 2 3 4H9L6 14H3C0 14 1 11 1.500 9 2.500 4 3 1 5 1z" fill="#2a9df0"/><path d="M8 1h3c2 0 2 3 3 4h-4z" fill="#1b55c8"/><path d="M1 10l5-2-1 6H3C1 14 .800 12 1 10z" fill="#9fd04a"/><path d="M12 5h3c3 0 2 3 1.500 5-1 4-2 7-4 7H8c-2 0-2-2-3-4h4z" fill="#e056a0"/><path d="M5 13h5l1 4H8c-2 0-2-2-3-4z" fill="#f7923a"/></svg></div>
    <div><svg viewBox="0 0 18 18"><path d="M6 4V1h6v3" fill="none" stroke="#4ab4f0" stroke-width="1.300"/><rect x="1.500" y="3.500" width="15" height="14" rx="1.500" fill="#f4f4f4"/><path d="M5 6h3.500v3.500H5z" fill="#e8452c"/><path d="M9.500 6H13v3.500H9.500z" fill="#7cb827"/><path d="M5 10.500h3.500V14H5z" fill="#2a9df0"/><path d="M9.500 10.500H13V14H9.500z" fill="#f7b91d"/></svg></div>
    <div><svg viewBox="0 0 18 18"><circle cx="9" cy="9" r="8.500" fill="#1583c8"/><path d="M3 6c3-1 4 1 6 0s4-2 7-1c-3 0-4 3-7 3s-3-2-6-2zM3 12c3-1 5 0 9-3-1 4-6 5-9 3z" fill="#fff"/></svg></div>
    <div><svg viewBox="0 0 18 18"><path d="M5 1h11v9H5z" fill="#50b4f0"/><path d="M4 7l7 5 6-5v9H4z" fill="#2486d8"/><path d="M0 5h9v9H0z" fill="#0a5cb4"/><circle cx="4.500" cy="9.500" r="2.400" fill="none" stroke="#fff" stroke-width="1.400"/></svg></div>
    <div><svg viewBox="0 0 18 18"><path d="M1 17l1.200-4A8 8 0 1 1 5.200 16z" fill="#1b2a1c" stroke="#25d366" stroke-width="1.600"/><path d="M6 5l1.500 0 .7 2.200-.9 1c.7 1.300 1.500 2 2.800 2.600l1-1.100 2 1c0 1.500-1.200 2.200-2.500 2C8 12 5 9 5 7z" fill="#25d366"/></svg></div>
    <div class="open"><svg viewBox="0 0 18 18"><path d="M9 9L1.600 4.700A8.500 8.500 0 0 1 16.400 4.700z" fill="#e33b2e"/><path d="M9 9l7.400-4.300A8.500 8.500 0 0 1 9 17.500z" fill="#fbc116"/><path d="M9 9v8.500A8.500 8.500 0 0 1 1.600 4.700z" fill="#2da44e"/><circle cx="9" cy="9" r="4.200" fill="#fff"/><circle cx="9" cy="9" r="3.200" fill="#3b7ded"/></svg></div>
    <div class="open"><svg viewBox="0 0 18 18"><path d="M3 3c2 1 3 0 5-2 0 2 3 2 5 4 1-1 1-2 1-2 5 6 3 14-5 14.500C1 17.500-1 10 3 3z" fill="#ff5a2a"/><path d="M9 1c-1 2 5 3 6 7 1 5-3 8-6 8 6-4 1-9-3-9z" fill="#ffc02f"/><circle cx="8.500" cy="10.500" r="3.600" fill="#8a3fe0"/></svg></div>
    <div><svg viewBox="0 0 18 18"><circle cx="9" cy="9" r="8.500" fill="#1583d8"/><path d="M3 3c6-5 14-1 14.500 5 0 4-5 5-8 3 3-1 1-5-2-5S2 8 .5 10C.500 7 1 5 3 3z" fill="#46d47c"/><path d="M7 7c-3 4 1 9 8 8-4 4-11 2-11-4 0-2 1-3 3-4z" fill="#0c50a0"/></svg></div>
    <div><svg viewBox="0 0 18 18"><rect x=".5" y=".5" width="17" height="17" rx="4" fill="#ef3939"/><path d="M5 5.500l4 7.500 4-7.500" fill="none" stroke="#fff" stroke-width="2.600"/></svg></div>
    <div><svg viewBox="0 0 18 18"><ellipse cx="9" cy="9" rx="8" ry="8.500" fill="#e01b2c"/><ellipse cx="9.500" cy="9" rx="3.500" ry="6.500" fill="#23271c"/></svg></div>
    <div><svg viewBox="0 0 18 18"><circle cx="9" cy="9" r="8.500" fill="#1ed760"/><path d="M4 6.500q5-2 10 1M4.500 9.500q4.500-1.500 8.500 1M5 12.300q4-1.200 7 .8" fill="none" stroke="#123" stroke-width="1.500"/></svg></div>
    <div><svg viewBox="0 0 18 18"><rect x="1" y="0" width="16" height="18" rx="2" fill="#272c38"/><path d="M5 6v5h2l2-4 2 5M11 6h2v5" fill="none" stroke="#cdd"/><path d="M10 12.500h4" stroke="#4cc"/></svg></div>
    <div><svg viewBox="0 0 18 18"><rect width="18" height="18" rx="1" fill="#b90d0d"/><path d="M9 3c-2 0 1 7 6 8-3-1-9 0-12 3 3 1 7-7 6-11z" fill="none" stroke="#fff" stroke-width="1.300"/></svg></div>
    <div><svg viewBox="0 0 18 18"><path d="M3 14C-1 12 1 7 4 8c0-6 8-6 9-2 4-1 6 6 2 8z" fill="#fbe3dc"/><path d="M7 12c0-4 2-5 5-5-1 4-2 5-5 5z" fill="#e4502e"/></svg></div>
    <div><svg viewBox="0 0 18 18"><path d="M1 2h16v11H1z" fill="#dff0fb"/><path d="M2 3h14v9H2z" fill="#9fd3f3"/><path d="M6 16h6l-1-3H7z" fill="#ccd"/></svg></div>
    <div><svg viewBox="0 0 18 18"><path d="M7 2l9 5-6 7-5-3z" fill="#dfe6f0"/><path d="M3 5l10 7M5 2l4 13" stroke="#8aa"/><circle cx="4" cy="13" r="2.300" fill="none" stroke="#d83a3a" stroke-width="1.300"/><circle cx="13" cy="4" r="1.500" fill="#d83a3a"/></svg></div>
    <div><svg viewBox="0 0 18 18"><path d="M1 2h16v11H1z" fill="#2f9be8"/><path d="M2 3h14L2 12z" fill="#7cc7f5"/><path d="M5 16.500h8v-1.500H5zM8 13h2v2H8z" fill="#ccd"/></svg></div>
    <div><svg viewBox="0 0 18 18"><ellipse cx="9" cy="8" rx="7.500" ry="5.500" fill="none" stroke="#8f9aac" stroke-width="2"/><path d="M8 15V6h4c3 0 3 4 0 4H8M11 10l4 5" fill="none" stroke="#2166c0" stroke-width="2"/></svg></div>
    <div class="open"><svg viewBox="0 0 18 18"><path d="M1 2h6l2 2h8v12H1z" fill="#e8b030"/><path d="M1 6h16v10H1z" fill="#ffd968"/><path d="M4 16v-5h10v5h-3v-2H7v2z" fill="#3d9ae0"/></svg></div>
    <div class="open cur"><svg viewBox="0 0 18 18"><path d="M10 1h6v16h-6z" fill="#e8a317"/><path d="M6 5h6v12H6z" fill="#f6c944"/><path d="M2 9h6v8H2z" fill="#fbe08a"/></svg></div>
  </div>
  <div class="tray">
    <svg class="wx" width="24" height="22" viewBox="0 0 24 22"><circle cx="11" cy="11" r="9" fill="#f9a72b"/><path d="M1 12h16M2 16h14" stroke="#dfe3e6" stroke-width="2"/><circle cx="17.500" cy="5.500" r="5.500" fill="#d4302a"/><text x="15.300" y="9" class="bd">1</text></svg>
    <span class="temp">33°C&nbsp; Smoke</span>
    <svg width="12" height="8" viewBox="0 0 12 8" class="ln white"><path d="M1 7l5-5 5 5" stroke-width="1.300"/></svg>
    <svg width="16" height="11" viewBox="0 0 16 11"><path d="M4 10.500C-1 10 0 5 3.500 5 5-1 12 0 12.500 4.500c4 0 4 6 0 6z" fill="#eee"/></svg>
    <svg width="14" height="16" viewBox="0 0 14 16" class="ln white"><rect x="1" y="3" width="8" height="11" rx="1.500"/><path d="M3 1h4M11.500 5v6M3.500 8.500h3M12 5l2-1M12 11l2 1"/></svg>
    <svg width="17" height="14" viewBox="0 0 17 14" class="ln white"><path d="M1 5h2.500L7 1.500v11L3.500 9H1zM9.500 4.500q2 2.500 0 5M12 3q3 4 0 8M14 1q4.500 6 0 12"/></svg>
    <svg width="15" height="15" viewBox="0 0 15 15" class="ln white"><path d="M1 13.500C1 7 6 2 14 1.500M4.500 14C4.500 9 8 6 14 5.500M8 14c0-3 2-5 6-5"/><circle cx="12" cy="12.500" r="1.500" fill="#fff"/></svg>
    <span class="eng">ENG</span><span class="clk">13:31</span>
    <svg width="16" height="16" viewBox="0 0 16 16"><path d="M0 1h16v11h-5l-3 3.500V12H0z" fill="#fff"/><path d="M3 4h10M3 6.500h10M3 9h7" stroke="#23271c"/></svg>
  </div>
</footer>
</div>
<script src="script.js"></script>
</body>
</html>
```
FILE: styles.css
```css
*{box-sizing:border-box;margin:0;padding:0}
body{width:1600px;height:900px;overflow:hidden;background:#f3f2f1;font-family:"Open Sans","Noto Sans",sans-serif;font-size:12px;color:#252423}
svg{display:block;flex:none}
.app{width:1600px;height:900px;display:flex;flex-direction:column}
.ln{fill:none;stroke:#3b3a39}
.ln.light{stroke:#e6e6e6}
.ln.lightgray{stroke:#b8b6b4}
.ln.dim{stroke:#6e6c6a}
.ln.white{stroke:#fff}
.ln.gray{stroke:#6b6967}

.titlebar{height:34px;background:#3b3a39;color:#fff;display:flex;align-items:center;flex:none}
.quick{display:flex;gap:14px;margin-left:17px;width:85px}
.doc{width:325px;white-space:nowrap;letter-spacing:-.3px;padding-top:6px}
.caret{margin-left:7px}
.topsearch{margin-left:286px;width:400px;height:24px;background:#d2d2d2;border-radius:2px;display:flex;align-items:center;padding-left:18px;gap:11px;color:#0e5a4c;font-size:13.500px;letter-spacing:-.2px}
.signin{margin-left:258px;width:46px;white-space:nowrap;letter-spacing:-.1px;padding-top:1px}
.winbtns{display:flex;gap:32px;margin-left:31px}

.tabs{height:35px;flex:none;background:#fafafa;display:flex;font-size:14px;letter-spacing:-.35px;line-height:32px;position:relative;padding-left:22.500px}
.tabs a{flex:none;white-space:nowrap}
.w-file{width:58.500px}.w-home{width:69.500px}.w-insert{width:66.500px}.w-model{width:90.500px}.w-view{width:61px}.w-opt{width:87.500px}.w-help{width:40px}
.tabs .active span{display:inline-block;width:38px;height:31px;border-bottom:3px solid #117865;font-weight:600;letter-spacing:-.9px}
.share{margin-left:auto;margin-right:6px;margin-top:4px;width:84px;height:24px;background:#117865;color:#fff;border-radius:4px;display:flex;align-items:center;padding-left:7px;font-size:12px;letter-spacing:-.2px}
.share span{margin:0 5px 0 8px;width:30px}

.ribbon{height:91px;flex:none;background:#fafafa;display:flex;padding-top:1px;box-shadow:0 1px 3px rgba(0,0,0,.25);position:relative;z-index:2}
.group{height:88px;border-right:1px solid #d2d0ce;display:flex;flex-direction:column;flex:none}
.g-clip{width:161px;padding-left:5px}.g-data{width:370px;padding-left:4px}.g-query{width:117px;padding-left:6px}.g-insert{width:147px;padding-left:8px}.g-calc{width:115px;padding-left:9px}.g-sens{width:74px}.g-share{width:60px}.g-cop{width:59px}
.row{display:flex;height:76px;padding-top:6px;flex:none}
.item{display:flex;flex-direction:column;align-items:center;text-align:center;line-height:16.500px;letter-spacing:-.42px;white-space:nowrap;flex:none}
.item>span{margin-top:2px}
.off{color:#c2c0be}
.w-paste{width:46px}.w48{width:48px}.w49{width:49px}.w71{width:71px}.w32{width:32px}.w66{width:66px}.w60{width:60px}.w40{width:40px}.w39{width:39px}.w52{width:52px}.w50{width:50px}.w72{width:73px}.w58{width:59px}.w57{width:57px}
.item i{display:inline-block;width:4px;height:4px;border:solid currentColor;border-width:0 1.300px 1.300px 0;transform:rotate(45deg);margin:0 1px 3px 4px}
.item i.tight{margin-left:2px}
.item i.solo{margin-left:0}
.mini{display:flex;flex-direction:column;padding-left:1px;margin-top:-6px;color:#c2c0be}
.mini div{display:flex;gap:4px;height:24px;align-items:center;letter-spacing:-.42px;white-space:nowrap}
.label{font-size:10px;letter-spacing:-.2px;text-align:center;line-height:14px;height:12px;flex:none;padding-right:4px}
.g-clip .label{padding-right:5px}
.g-sens .label,.g-share .label,.g-cop .label{padding-right:0}
.collapse{margin:78px 5px 0 auto}

.body{height:685px;flex:none;display:flex}
.rail{width:41px;background:#f3f2f1;flex:none}
.rail div{height:40px;display:flex;align-items:center;justify-content:center;border-left:3px solid transparent;padding-right:2px}
.rail .on{border-color:#117865}
.dax{font-size:7px;fill:#6b6967;stroke:none;font-weight:700}
.center{width:1197px;flex:none}
.stage{display:flex;height:650px}
.canvas{width:1165px;background:#7f00ff;border-right:1px solid #c8c6c4;padding-left:9px;flex:none}
.page{width:1146px;height:644px;padding:0 0 0 2px;background:
 repeating-linear-gradient(180deg,#605e5c 0 2px,transparent 2px 4px) 0 0/2px 100% no-repeat,
 repeating-linear-gradient(180deg,#605e5c 0 2px,transparent 2px 4px) 100% 0/2px 100% no-repeat,
 repeating-linear-gradient(90deg,#605e5c 0 2px,transparent 2px 4px) 0 100%/100% 2px no-repeat}
.v{background:#fff;border-radius:21px;flex:none}
.v svg{overflow:visible}
.line{border:1px solid #111}
.square{border-radius:0}
.top{display:flex;height:133px;align-items:flex-start}
.title{width:483px;height:74px;margin-top:20px;padding:12px 0 0 13px}
h1{font:bold 24px/28px "Liberation Sans",sans-serif;white-space:nowrap;letter-spacing:-.15px}
.card{width:208px;height:111px;margin:9px 0 0 49px}
.slicer{width:186px;height:113px;margin:8px 0 0 13px;padding:13px 0 0 30px}
.slicer button{display:block;width:126px;height:41px;border:1px solid #666;background:#fff;font:bold 11px "Open Sans",sans-serif;letter-spacing:-.5px;margin-bottom:4px;color:#000}
.slicer .sel{background:#333;color:#fff;height:42px}
.checks{width:170px;height:127px;margin:9px 0 0 21px;background:#fffcff;box-shadow:5px 5px 8px rgba(40,20,80,.55);padding:13px 0 0 19px;font-weight:700;font-size:13px;letter-spacing:-.05px}
.checks label{display:flex;align-items:center;height:26px;gap:8px}
.checks b{width:14px;height:14px;border:1px solid #777}
.checks b.sel{background:#222;border-color:#222}
.cols{display:flex}
.c1{width:373px;flex:none}.c2{width:511px;flex:none}
.h188{height:188px;width:366px}.h149{height:150px;width:366px;margin-top:7px}.h156{height:156px;width:366px;margin-top:8px}
.h212{width:499px;height:212px}.h289{width:499px;height:289px;margin-top:8px}
.h212b{width:253px;height:212px;margin:28px 0 0 4px}.h261{width:257px;height:261px;margin-top:8px}
.ser{font-family:"Noto Serif","Droid Serif","Liberation Serif",serif;font-size:16px;fill:#252423}
.seg{font-family:"Open Sans",sans-serif;fill:#605e5c}
.din{font-family:Roboto,sans-serif;fill:#252423}
.tt{font-size:14.500px}
.big{font-size:48.500px;font-weight:500}
.val{font-size:41px;font-weight:300;fill:#605e5c}
.mid{font-size:14px}
.ax{font-size:11px}
.leg{font-size:12px}
.b{font-weight:700}
.m{text-anchor:middle}

.filters{width:32px;background:#fff;display:flex;flex-direction:column;align-items:center;padding-top:12px;flex:none}
.filters svg:nth-child(2){margin:15px 0 0 3px}
.filters span{writing-mode:vertical-rl;font-size:14px;font-weight:600;margin-top:8px;letter-spacing:.1px;line-height:16px}

.pages{height:35px;background:#f3f2f1;display:flex;border-left:1px solid #e1dfdd;margin-left:-1px;width:1198px}
.desk{width:24px;height:31px;border-bottom:3px solid #117865;border-radius:2px;margin-left:10px;padding:6px 0 0 1px}
.phone{margin:5px 0 0 24.500px}
.pv{margin:14px 0 0 21.500px}
.nx{margin:14px 0 0 17px}
.ptab{margin-left:6px;width:76px;background:#fff;border-left:1px solid #b3b0ad;border-bottom:4px solid #117865;text-align:center;line-height:37px;letter-spacing:-.4px}
.padd{width:40px;background:#117865;display:flex;justify-content:center;padding-top:11px}

.viz{width:182px;flex:none;border-left:1px solid #d8d6d4;border-right:1px solid #d8d6d4;position:relative}
.ph{display:flex;justify-content:space-between;align-items:center;height:38px;padding:0 8px}
.ph h2{font-size:15.500px;font-weight:600;letter-spacing:-.3px}
.bv{padding-left:8px;line-height:16px;letter-spacing:-.2px;font-weight:500}
.modes{display:flex;gap:34px;padding:3px 0 0 8px}
.mode{width:32px;height:32px;border-radius:2px;display:flex;align-items:center;justify-content:center}
.mode.sel{background:#d0cecc}
.notch{margin-top:4px}
.icons{display:grid;grid-template-columns:repeat(6,28px);grid-auto-rows:28px;padding:11px 0 0 11px}
.icons svg{width:18px;height:18px;overflow:visible}
.k{fill:none;stroke:#3a3a38}
.n{fill:none}
.w{fill:#fff;stroke:#3a3a38}
.bl{fill:#83beec;stroke:#0063b1}
.g{fill:#c8c6c4;stroke:#7a7574}
.it{font-size:8px;fill:#2b88d8}
.rt{font-size:14px;font-weight:700;fill:#2e86c1}
.py{font-size:15px}
.more{font-size:16px;line-height:14px;letter-spacing:1.500px;padding-left:12px;margin-top:-4px;height:31px}
.wells{border-top:1px solid #d8d6d4;padding:8px 6px 0 4px;letter-spacing:-.25px}
.lab{line-height:17px;padding-left:8px}
.well{height:28px;border:1px dashed #bebbb8;background:#fff;border-radius:2px;margin-top:5px;line-height:27px;padding-left:10px;white-space:nowrap}
.st{margin-top:10px;font-weight:600;color:#484644}
.tg{display:flex;justify-content:space-between;align-items:center;padding:0 16px 0 8px;height:16px;margin-top:8px}
.second{margin-top:11px}
.tg em{width:32px;height:16px;border-radius:8px;font-style:normal;font-size:10px;display:flex;align-items:center;gap:2px;padding-left:4px;letter-spacing:-.3px}
.tg .off{border:1px solid #777;background:#fff;color:#605e5c}
.tg .on{background:#117865;color:#fff;padding-left:5px}
.tg u{width:8px;height:8px;border-radius:50%;background:#605e5c}
.tg .on u{background:#fff}
.two{height:26px;line-height:25px;margin-top:11px;padding-left:8px}
.ghost{position:absolute;left:20px;top:627px;width:173px;height:22px;background:#eaeef1;color:#dddddf;z-index:1;padding-left:32px;line-height:21px;letter-spacing:-.2px}
.datap{width:180px}
.datap .ph{padding-left:8px}
.dsearch{width:172px;height:27px;border:1px solid #777;border-radius:2px;margin:7px 0 0 4px;display:flex;align-items:center;gap:7px;padding-left:7px;font-size:13.500px;color:#555;letter-spacing:-.2px}
.trow{display:flex;align-items:center;padding-left:15px;margin-top:13px;white-space:nowrap;letter-spacing:-.42px;color:#444}
.trow svg+svg{margin-left:7px}
.trow span{margin-left:6px}

.status{height:24px;flex:none;border-top:1px solid #dcdad8;display:flex;align-items:center;letter-spacing:-.25px;color:#444}
.pg{width:1191px;padding-left:4px;flex:none;padding-top:2px}
.status>*{flex:none}
.status svg:first-of-type{margin-left:4px}
.pct{margin-left:13px;width:42px}
.upd{margin-left:14px;white-space:nowrap;padding-top:2px}

.taskbar{height:31px;flex:none;background:linear-gradient(90deg,#262b1e,#1e2217 45%,#24291a 75%,#1b2016);border-top:1px solid #000;display:flex;color:#fff}
.start{width:37px;display:flex;align-items:center;justify-content:center;flex:none}
.tsearch{width:256px;background:#333;border:1px solid #555;border-bottom:0;display:flex;align-items:center;padding-left:11px;font-size:14.500px;color:#ddd;letter-spacing:-.3px;flex:none}
.tsearch span{margin-left:10px;width:164px}
.doodle{align-self:flex-end}
.apps{display:flex;margin-left:.5px}
.apps div{width:36.980px;display:flex;align-items:center;justify-content:center;flex:none}
.apps .tv{margin-right:2.200px}
.apps div svg{width:18px;height:18px}
.open{box-shadow:inset 0 -2px #6cb4ea}
.cur{background:rgba(255,255,255,.2)}
.tray{margin-left:auto;display:flex;align-items:center;white-space:nowrap;padding-right:24px;font-size:12px}
.bd{font-size:9px;fill:#fff}
.temp{font-size:14px;letter-spacing:-.35px;margin:0 19px 0 7px;width:81px}
.tray svg{margin-right:9px}
.tray .wx{margin:0}
.eng{width:36px;letter-spacing:-.4px}.clk{width:46px;letter-spacing:-.2px}
.tray svg:last-child{margin:0}
```
FILE: script.js
```js
// Scatter plot points: x pixel positions inside the plot, one list per count value.
const series = [
  { y: 550.7, xs: [479.7,527.3,684.3,695.7,757,852.3,902.3] },
  { y: 659.7, xs: [457,482,498,548,702.7,707,738.7,745.7,747.7,752.3,761.7,773,775,786.7,791,807,827.3,834.3,845.7,866,868] },
  { y: 769.2, xs: [454.7,459.3,468.3,473.3,484.3,493.7,496,500.3,507.3,522.7,525,534.3,539,552,554.7,557,691,698.7,700.3,709.3,720.7,727.7,729.3,741.7,743.7,750.3,759.3,768.3,777.7,780,782,789,796.3,798.3,809.3,814,816.3,820.7,823,825.3,830,843.7,859.3,870.7,875.3,882,886.3,888.7,891,898,907] }
];
const dots = document.getElementById('dots');
for (const s of series) for (const x of s.xs) {
  const c = document.createElementNS('http://www.w3.org/2000/svg', 'circle');
  c.setAttribute('cx', x);
  c.setAttribute('cy', s.y);
  c.setAttribute('r', 4.4);
  dots.appendChild(c);
}
```
